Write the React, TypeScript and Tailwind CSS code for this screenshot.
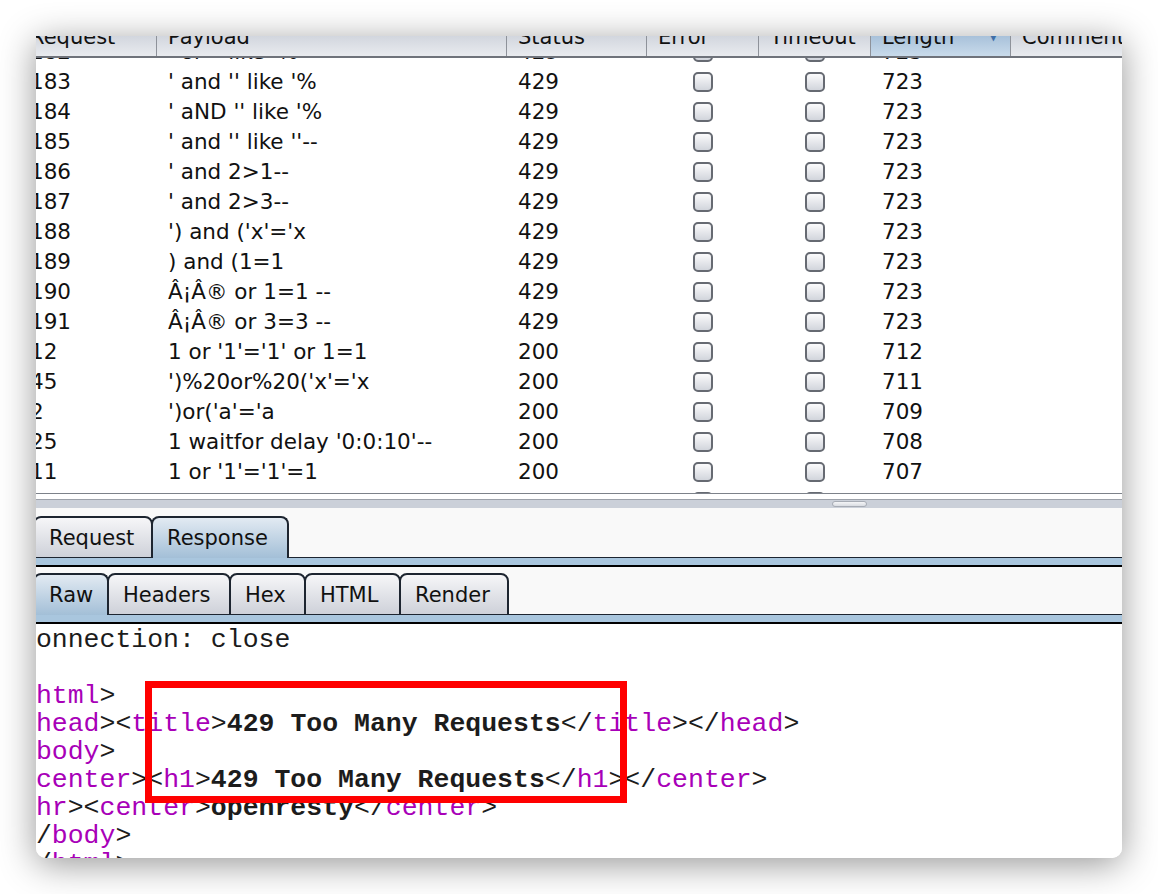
import React from "react";

const rows: [string, string, string, string][] = [
  ["182", "' or '' like '%", "429", "723"],
  ["183", "' and '' like '%", "429", "723"],
  ["184", "' aND '' like '%", "429", "723"],
  ["185", "' and '' like ''--", "429", "723"],
  ["186", "' and 2>1--", "429", "723"],
  ["187", "' and 2>3--", "429", "723"],
  ["188", "') and ('x'='x", "429", "723"],
  ["189", ") and (1=1", "429", "723"],
  ["190", "Â¡Â® or 1=1 --", "429", "723"],
  ["191", "Â¡Â® or 3=3 --", "429", "723"],
  ["12", "1 or '1'='1' or 1=1", "200", "712"],
  ["45", "')%20or%20('x'='x", "200", "711"],
  ["2", "')or('a'='a", "200", "709"],
  ["25", "1 waitfor delay '0:0:10'--", "200", "708"],
  ["11", "1 or '1'='1'=1", "200", "707"],
  ["10", "' or 1=1--", "200", "704"],
];

const cols = [
  { name: "Request", w: "w-[138px]" },
  { name: "Payload", w: "w-[350px]" },
  { name: "Status", w: "w-[140px]" },
  { name: "Error", w: "w-[112px]" },
  { name: "Timeout", w: "w-[112px]" },
  { name: "Length", w: "w-[140px]" },
  { name: "Comment", w: "w-[200px]" },
];

const Checkbox = () => (
  <div className="w-[20px] h-[20px] rounded-[5px] border-2 border-[#666a72] bg-gradient-to-b from-[#fbfbfc] to-[#d2d5dc]" />
);

type TabDef = { label: string; w: string };

const Tab = ({ label, w, selected }: TabDef & { selected?: boolean }) => (
  <div
    className={
      w +
      (selected
        ? " relative z-10 -ml-[2px] first:ml-0 h-[42px] pl-[14px] flex items-center rounded-t-[8px] border-2 border-b-0 border-[#1d2530] bg-gradient-to-b from-[#e2eaf2] to-[#a3bfd7]"
        : " -ml-[2px] first:ml-0 h-[42px] pl-[14px] flex items-center rounded-t-[8px] border-2 border-b border-[#1d2530] bg-gradient-to-b from-[#f6f6f8] to-[#ced1d9]")
    }
  >
    <span className="text-[21px] leading-none text-[#111] pt-[1px] whitespace-nowrap">{label}</span>
  </div>
);

const TabStrip = ({ tabs, active }: { tabs: TabDef[]; active: string }) => (
  <div>
    <div className="flex items-end -ml-[3px]">
      {tabs.map((t) => (
        <Tab key={t.label} label={t.label} w={t.w} selected={t.label === active} />
      ))}
      <div className="flex-1 h-[42px] border-b border-[#1d2530]" />
    </div>
    <div className="h-[7px] bg-[#a9c6de]" />
    <div className="h-[2px] bg-black" />
  </div>
);

const P = ({ children }: { children: React.ReactNode }) => (
  <span className="text-[#a800b8]">{children}</span>
);
const B = ({ children }: { children: React.ReactNode }) => (
  <span className="font-bold text-[#1c1c1c]">{children}</span>
);

export default function App() {
  return (
    <div
      className="w-[1158px] h-[894px] bg-white overflow-hidden pt-[36px] pl-[36px]"
      style={{ fontFamily: '"DejaVu Sans", "Liberation Sans", sans-serif' }}
    >
      <div className="w-[1086px] h-[822px] bg-white rounded-b-[10px] overflow-hidden flex flex-col shadow-[0_6px_36px_rgba(0,0,0,0.42)]">
        {/* results table */}
        <div className="overflow-hidden">
          <div className="flex -ml-[17px] h-[22px] border-b-2 border-[#6f737b] bg-gradient-to-b from-[#d2d6de] to-[#e9ebef] overflow-hidden">
            {cols.map((c) => (
              <div
                key={c.name}
                className={
                  c.w +
                  " shrink-0 h-full border-r border-[#8e929a] px-[11px] flex justify-between " +
                  (c.name === "Length" ? "bg-gradient-to-b from-[#a8c1da] to-[#c9dbeb]" : "")
                }
              >
                <span className="-mt-[9px] text-[21px] leading-[20px] text-[#111]">{c.name}</span>
                {c.name === "Length" && (
                  <span className="-mt-[6px] text-[12px] leading-[12px] text-[#3f6fa8] mr-[1px]">▼</span>
                )}
              </div>
            ))}
          </div>
          <div className="h-[436px] overflow-hidden border-b border-[#7d828a]">
            <div className="-mt-[21px] -ml-[17px]">
              {rows.map((r) => (
                <div key={r[0]} className="flex h-[30px] items-center text-[21.5px] text-[#111]">
                  <div className="w-[138px] shrink-0 px-[11px] whitespace-nowrap">{r[0]}</div>
                  <div className="w-[350px] shrink-0 px-[11px] whitespace-nowrap">{r[1]}</div>
                  <div className="w-[140px] shrink-0 px-[11px]">{r[2]}</div>
                  <div className="w-[112px] shrink-0 flex justify-center">
                    <Checkbox />
                  </div>
                  <div className="w-[112px] shrink-0 flex justify-center">
                    <Checkbox />
                  </div>
                  <div className="w-[140px] shrink-0 px-[11px]">{r[3]}</div>
                </div>
              ))}
            </div>
          </div>
        </div>

        {/* split divider */}
        <div className="h-[5px] bg-white" />
        <div className="h-[9px] border-t border-[#9ca1a9] bg-[#cbd0d9] flex items-start">
          <div className="ml-[796px] mt-[1px] w-[35px] h-[6px] rounded-full border border-[#a7acb5] bg-gradient-to-b from-[#f4f5f7] to-[#d9dce2]" />
        </div>

        {/* request / response */}
        <div className="bg-[#f9f9f9] pt-[8px]">
          <TabStrip
            tabs={[
              { label: "Request", w: "w-[120px]" },
              { label: "Response", w: "w-[138px]" },
            ]}
            active="Response"
          />
        </div>
        <div className="bg-[#f9f9f9] pt-[6px]">
          <TabStrip
            tabs={[
              { label: "Raw", w: "w-[76px]" },
              { label: "Headers", w: "w-[124px]" },
              { label: "Hex", w: "w-[77px]" },
              { label: "HTML", w: "w-[97px]" },
              { label: "Render", w: "w-[110px]" },
            ]}
            active="Raw"
          />
        </div>

        {/* raw message */}
        <div className="relative flex-1 overflow-hidden bg-white">
          <div
            className="mt-[2px] -ml-[16px] text-[26.5px] leading-[28px] text-[#1c1c1c] whitespace-pre"
            style={{ fontFamily: '"Liberation Mono", "Courier New", monospace' }}
          >
            <div>Connection: close</div>
            <div>&nbsp;</div>
            <div>
              &lt;<P>html</P>&gt;
            </div>
            <div>
              &lt;<P>head</P>&gt;&lt;<P>title</P>&gt;<B>429 Too Many Requests</B>&lt;/<P>title</P>&gt;&lt;/<P>head</P>&gt;
            </div>
            <div>
              &lt;<P>body</P>&gt;
            </div>
            <div>
              &lt;<P>center</P>&gt;&lt;<P>h1</P>&gt;<B>429 Too Many Requests</B>&lt;/<P>h1</P>&gt;&lt;/<P>center</P>&gt;
            </div>
            <div>
              &lt;<P>hr</P>&gt;&lt;<P>center</P>&gt;<B>openresty</B>&lt;/<P>center</P>&gt;
            </div>
            <div>
              &lt;/<P>body</P>&gt;
            </div>
            <div>
              &lt;/<P>html</P>&gt;
            </div>
          </div>
          <div className="absolute left-[109px] top-[57px] w-[482px] h-[122px] border-[7px] border-[#ff0000]" />
        </div>
      </div>
    </div>
  );
}
